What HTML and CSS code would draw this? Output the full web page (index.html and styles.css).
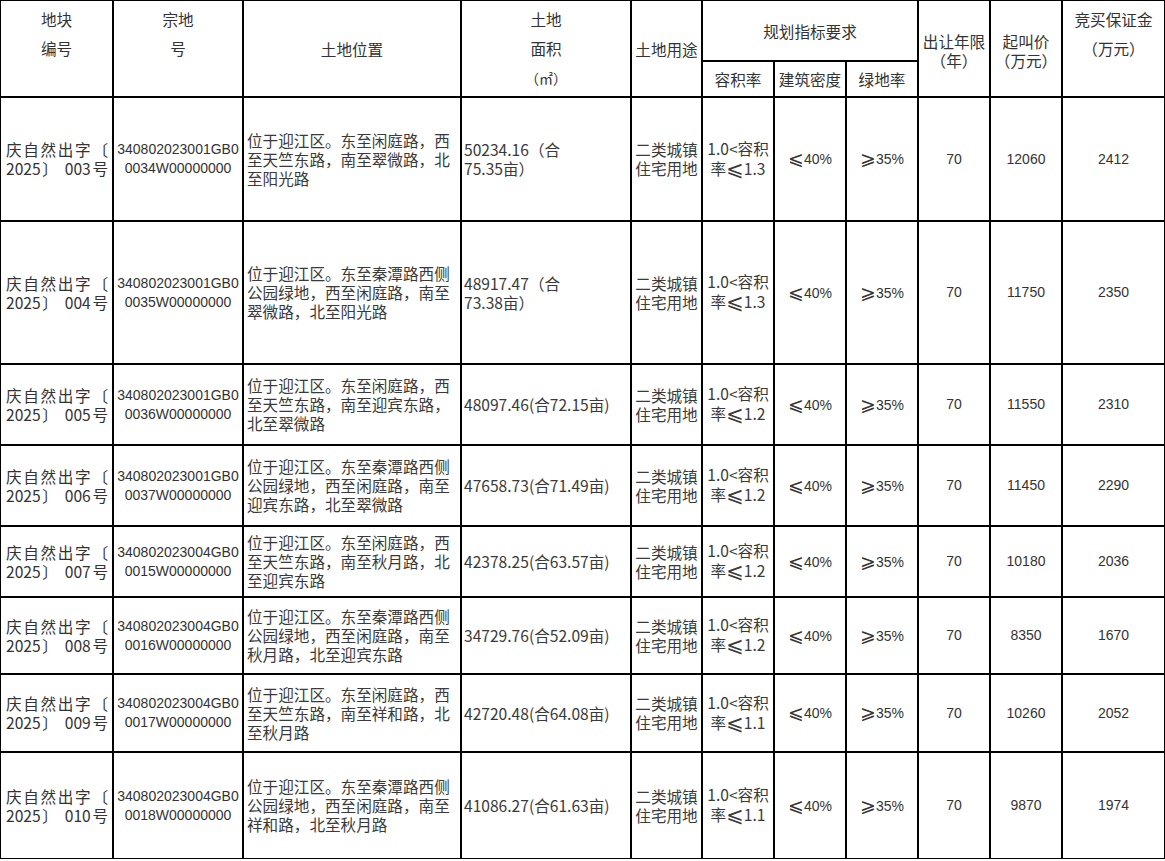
FILE: index.html
```html
<!DOCTYPE html>
<html lang="zh-CN">
<head>
<meta charset="utf-8">
<title>地块出让</title>
<link rel="stylesheet" href="styles.css">
</head>
<body>
<table class="land">
  <colgroup>
    <col class="w1"><col class="w2"><col class="w3"><col class="w4"><col class="w5">
    <col class="w6"><col class="w7"><col class="w8"><col class="w9"><col class="w10"><col class="w11">
  </colgroup>
  <thead>
    <tr class="h1">
      <th rowspan="2" class="tall">地块<br>编号<br>&nbsp;</th>
      <th rowspan="2" class="tall">宗地<br>号<br>&nbsp;</th>
      <th rowspan="2">土地位置</th>
      <th rowspan="2" class="tall">土地<br>面积<br><span class="unit">（㎡）</span></th>
      <th rowspan="2">土地用途</th>
      <th colspan="3">规划指标要求</th>
      <th rowspan="2" class="tight">出让年限<br>（年）</th>
      <th rowspan="2" class="tight">起叫价<br>（万元）</th>
      <th rowspan="2" class="tall">竞买保证金<br>（万元）<br>&nbsp;</th>
    </tr>
    <tr class="h2">
      <th>容积率</th>
      <th>建筑密度</th>
      <th>绿地率</th>
    </tr>
  </thead>
  <tbody>
    <tr class="r1">
      <td class="code">庆自然出字〔<br>2025〕 003号</td>
      <td class="num">340802023001GB0<br>0034W00000000</td>
      <td class="song loc">位于迎江区。东至闲庭路，西<br>至天竺东路，南至翠微路，北<br>至阳光路</td>
      <td class="song area">50234.16（合<br>75.35亩）</td>
      <td class="song mid">二类城镇<br>住宅用地</td>
      <td class="song mid">1.0&lt;容积<br>率<span class="le">⩽</span>1.3</td>
      <td class="num"><span class="le">⩽</span>40%</td>
      <td class="num"><span class="le">⩾</span>35%</td>
      <td class="num">70</td>
      <td class="num">12060</td>
      <td class="num">2412</td>
    </tr>
    <tr class="r2">
      <td class="code">庆自然出字〔<br>2025〕 004号</td>
      <td class="num">340802023001GB0<br>0035W00000000</td>
      <td class="song loc">位于迎江区。东至秦潭路西侧<br>公园绿地，西至闲庭路，南至<br>翠微路，北至阳光路</td>
      <td class="song area">48917.47（合<br>73.38亩）</td>
      <td class="song mid">二类城镇<br>住宅用地</td>
      <td class="song mid">1.0&lt;容积<br>率<span class="le">⩽</span>1.3</td>
      <td class="num"><span class="le">⩽</span>40%</td>
      <td class="num"><span class="le">⩾</span>35%</td>
      <td class="num">70</td>
      <td class="num">11750</td>
      <td class="num">2350</td>
    </tr>
    <tr class="r3">
      <td class="code">庆自然出字〔<br>2025〕 005号</td>
      <td class="num">340802023001GB0<br>0036W00000000</td>
      <td class="song loc">位于迎江区。东至闲庭路，西<br>至天竺东路，南至迎宾东路，<br>北至翠微路</td>
      <td class="song area">48097.46(合72.15亩)</td>
      <td class="song mid">二类城镇<br>住宅用地</td>
      <td class="song mid">1.0&lt;容积<br>率<span class="le">⩽</span>1.2</td>
      <td class="num"><span class="le">⩽</span>40%</td>
      <td class="num"><span class="le">⩾</span>35%</td>
      <td class="num">70</td>
      <td class="num">11550</td>
      <td class="num">2310</td>
    </tr>
    <tr class="r4">
      <td class="code">庆自然出字〔<br>2025〕 006号</td>
      <td class="num">340802023001GB0<br>0037W00000000</td>
      <td class="song loc">位于迎江区。东至秦潭路西侧<br>公园绿地，西至闲庭路，南至<br>迎宾东路，北至翠微路</td>
      <td class="song area">47658.73(合71.49亩)</td>
      <td class="song mid">二类城镇<br>住宅用地</td>
      <td class="song mid">1.0&lt;容积<br>率<span class="le">⩽</span>1.2</td>
      <td class="num"><span class="le">⩽</span>40%</td>
      <td class="num"><span class="le">⩾</span>35%</td>
      <td class="num">70</td>
      <td class="num">11450</td>
      <td class="num">2290</td>
    </tr>
    <tr class="r5">
      <td class="code">庆自然出字〔<br>2025〕 007号</td>
      <td class="num">340802023004GB0<br>0015W00000000</td>
      <td class="song loc">位于迎江区。东至闲庭路，西<br>至天竺东路，南至秋月路，北<br>至迎宾东路</td>
      <td class="song area">42378.25(合63.57亩)</td>
      <td class="song mid">二类城镇<br>住宅用地</td>
      <td class="song mid">1.0&lt;容积<br>率<span class="le">⩽</span>1.2</td>
      <td class="num"><span class="le">⩽</span>40%</td>
      <td class="num"><span class="le">⩾</span>35%</td>
      <td class="num">70</td>
      <td class="num">10180</td>
      <td class="num">2036</td>
    </tr>
    <tr class="r6">
      <td class="code">庆自然出字〔<br>2025〕 008号</td>
      <td class="num">340802023004GB0<br>0016W00000000</td>
      <td class="song loc">位于迎江区。东至秦潭路西侧<br>公园绿地，西至闲庭路，南至<br>秋月路，北至迎宾东路</td>
      <td class="song area">34729.76(合52.09亩)</td>
      <td class="song mid">二类城镇<br>住宅用地</td>
      <td class="song mid">1.0&lt;容积<br>率<span class="le">⩽</span>1.2</td>
      <td class="num"><span class="le">⩽</span>40%</td>
      <td class="num"><span class="le">⩾</span>35%</td>
      <td class="num">70</td>
      <td class="num">8350</td>
      <td class="num">1670</td>
    </tr>
    <tr class="r7">
      <td class="code">庆自然出字〔<br>2025〕 009号</td>
      <td class="num">340802023004GB0<br>0017W00000000</td>
      <td class="song loc">位于迎江区。东至闲庭路，西<br>至天竺东路，南至祥和路，北<br>至秋月路</td>
      <td class="song area">42720.48(合64.08亩)</td>
      <td class="song mid">二类城镇<br>住宅用地</td>
      <td class="song mid">1.0&lt;容积<br>率<span class="le">⩽</span>1.1</td>
      <td class="num"><span class="le">⩽</span>40%</td>
      <td class="num"><span class="le">⩾</span>35%</td>
      <td class="num">70</td>
      <td class="num">10260</td>
      <td class="num">2052</td>
    </tr>
    <tr class="r8">
      <td class="code">庆自然出字〔<br>2025〕 010号</td>
      <td class="num">340802023004GB0<br>0018W00000000</td>
      <td class="song loc">位于迎江区。东至秦潭路西侧<br>公园绿地，西至闲庭路，南至<br>祥和路，北至秋月路</td>
      <td class="song area">41086.27(合61.63亩)</td>
      <td class="song mid">二类城镇<br>住宅用地</td>
      <td class="song mid">1.0&lt;容积<br>率<span class="le">⩽</span>1.1</td>
      <td class="num"><span class="le">⩽</span>40%</td>
      <td class="num"><span class="le">⩾</span>35%</td>
      <td class="num">70</td>
      <td class="num">9870</td>
      <td class="num">1974</td>
    </tr>
  </tbody>
</table>
</body>
</html>
```
FILE: styles.css
```css
html, body {
  margin: 0;
  padding: 0;
  background: #fff;
}

.land {
  border-collapse: separate;
  border-spacing: 0;
  table-layout: fixed;
  width: 1165px;
  color: #333;
  font-family: "Noto Sans CJK SC", "Liberation Sans", sans-serif;
  font-size: 15.6px;
}

.w1 { width: 113px; }
.w2 { width: 130px; }
.w3 { width: 218px; }
.w4 { width: 170px; }
.w5 { width: 71px; }
.w6 { width: 72px; }
.w7 { width: 72px; }
.w8 { width: 72px; }
.w9 { width: 72px; }
.w10 { width: 72px; }
.w11 { width: 103px; }

.land th,
.land td {
  border: 1px solid #000;
  padding: 0 2px;
  vertical-align: middle;
  text-align: center;
  box-sizing: border-box;
  overflow: hidden;
}

.land th {
  font-weight: normal;
  line-height: 20px;
  white-space: nowrap;
}

.land th.tall {
  line-height: 29px;
}

.land th.tight {
  line-height: 19px;
  padding-top: 4px;
}

.unit {
  font-size: 14px;
}

.h1 { height: 61px; }
.h2 { height: 36px; }

.r1 { height: 124px; }
.r2 { height: 143px; }
.r3 { height: 81px; }
.r4 { height: 81px; }
.r5 { height: 71px; }
.r6 { height: 77px; }
.r7 { height: 78px; }
.r8 { height: 107px; }

.land td {
  line-height: 19px;
}

.land td.code {
  text-align: justify;
  text-align-last: justify;
  padding: 0 4px 0 5px;
  font-size: 15.6px;
  color: #333;
}

.land td.num {
  font-family: "Liberation Sans", "Noto Sans CJK SC", sans-serif;
  font-size: 14px;
  color: #333;
}

.song {
  color: #3a3a3a;
}

.land td.loc {
  text-align: left;
  padding: 0 2px 0 3px;
  white-space: nowrap;
}

.land td.area {
  text-align: left;
  padding: 0 2px 0 2px;
  white-space: nowrap;
}

.land td.mid {
  text-align: center;
  padding: 0 1px;
  white-space: nowrap;
}

.le {
  font-family: "DejaVu Sans", sans-serif;
  font-size: 1.35em;
  line-height: 1;
  vertical-align: -1px;
}
```
